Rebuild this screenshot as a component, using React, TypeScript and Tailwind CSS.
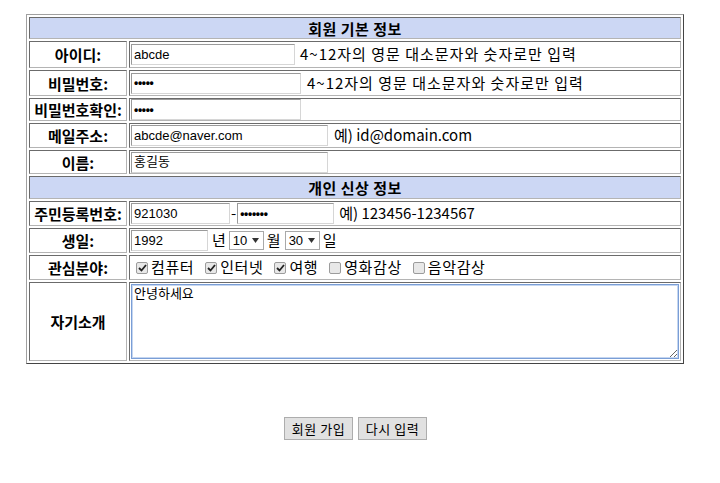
import React from "react";

const KR = { fontFamily: '"Noto Sans CJK KR", "Noto Sans", sans-serif' };

function Cell({ children, className = "", colSpan }: { children?: React.ReactNode; className?: string; colSpan?: number }) {
  return (
    <td
      colSpan={colSpan}
      className={`p-[1px] border border-t-[#6b6b6b] border-l-[#6b6b6b] border-r-[#b4b4b4] border-b-[#b4b4b4] ${className}`}
    >
      {children}
    </td>
  );
}

function Label({ children, h }: { children: React.ReactNode; h: string }) {
  return (
    <div className={`flex items-center justify-center font-bold text-[15px] leading-none whitespace-nowrap ${h}`}>{children}</div>
  );
}

function TextBox({ value, w, pw }: { value: string; w: string; pw?: boolean }) {
  return (
    <span
      className={`inline-flex items-center h-[21px] border border-t-[#9a9a9a] border-l-[#9a9a9a] border-r-[#d6d6d6] border-b-[#d6d6d6] bg-white px-[2px] text-[13px] text-black tracking-normal ${w}`}
      style={{ fontFamily: '"Liberation Sans", Arial, "Noto Sans CJK KR", sans-serif' }}
    >
      {pw ? <span className="text-[12px] tracking-[-0.3px] font-bold">{value}</span> : value}
    </span>
  );
}

function Sel({ v }: { v: string }) {
  return (
    <span
      className="inline-flex items-center h-[19px] w-[35px] border border-[#a9a9a9] bg-white pl-[3px] text-[13px] gap-[5px] tracking-normal"
      style={{ fontFamily: '"Liberation Sans", Arial, sans-serif' }}
    >
      {v}
      <svg width="7" height="5" viewBox="0 0 7 5">
        <path d="M0 0 H7 L3.5 5 Z" fill="#333" />
      </svg>
    </span>
  );
}

function Check({ on, label, first }: { on: boolean; label: string; first?: boolean }) {
  return (
    <span className={`inline-flex items-center ${first ? "ml-[4px]" : "ml-[11px]"}`}>
      <span className="inline-flex items-center justify-center w-[12px] h-[12px] border border-[#9c9c9c] bg-[#e8e8e8] rounded-[2px] mr-[3px]">
        {on && (
          <svg width="9" height="8" viewBox="0 0 9 8">
            <path d="M1 4 L3.5 6.5 L8 1" stroke="#222" strokeWidth="1.8" fill="none" />
          </svg>
        )}
      </span>
      <span className="text-[15px] tracking-[0.6px]">{label}</span>
    </span>
  );
}

export default function App() {
  return (
    <div className="w-[720px] h-[483px] bg-white text-black" style={KR}>
      <div className="pt-[14px] pl-[26px]">
        <table className="w-[658px] border-separate border-spacing-[2px] border border-t-[#a0a0a0] border-l-[#a0a0a0] border-r-[#444] border-b-[#444]">
          <tbody>
            <tr>
              <Cell colSpan={2} className="bg-[#ccd7f4]">
                <div className="h-[18px] flex items-center justify-center font-bold text-[15px] leading-none tracking-[0.5px]">회원 기본 정보</div>
              </Cell>
            </tr>
            <tr>
              <Cell className="w-[98px]"><Label h="h-[23px]">아이디:</Label></Cell>
              <Cell>
                <div className="h-[23px] flex items-center text-[15px] whitespace-nowrap tracking-[1px]">
                  <TextBox value="abcde" w="w-[164px]" />
                  <span className="ml-[5px]">4~12자의 영문 대소문자와 숫자로만 입력</span>
                </div>
              </Cell>
            </tr>
            <tr>
              <Cell><Label h="h-[22px]">비밀번호:</Label></Cell>
              <Cell>
                <div className="h-[22px] flex items-center text-[15px] whitespace-nowrap tracking-[1px]">
                  <TextBox value="•••••" w="w-[170px]" pw />
                  <span className="ml-[6px]">4~12자의 영문 대소문자와 숫자로만 입력</span>
                </div>
              </Cell>
            </tr>
            <tr>
              <Cell><Label h="h-[19px]">비밀번호확인:</Label></Cell>
              <Cell>
                <div className="h-[19px] flex items-center">
                  <TextBox value="•••••" w="w-[170px]" pw />
                </div>
              </Cell>
            </tr>
            <tr>
              <Cell><Label h="h-[21px]">메일주소:</Label></Cell>
              <Cell>
                <div className="h-[21px] flex items-center text-[15px] whitespace-nowrap">
                  <TextBox value="abcde@naver.com" w="w-[197px]" />
                  <span className="ml-[6px]">예) id@domain.com</span>
                </div>
              </Cell>
            </tr>
            <tr>
              <Cell><Label h="h-[20px]">이름:</Label></Cell>
              <Cell>
                <div className="h-[20px] flex items-center">
                  <TextBox value="홍길동" w="w-[197px]" />
                </div>
              </Cell>
            </tr>
            <tr>
              <Cell colSpan={2} className="bg-[#ccd7f4]">
                <div className="h-[19px] flex items-center justify-center font-bold text-[15px] leading-none tracking-[0.5px]">개인 신상 정보</div>
              </Cell>
            </tr>
            <tr>
              <Cell><Label h="h-[21px]">주민등록번호:</Label></Cell>
              <Cell>
                <div className="h-[21px] flex items-center text-[15px] whitespace-nowrap">
                  <TextBox value="921030" w="w-[99px]" />
                  <span className="mx-[1px]">-</span>
                  <TextBox value="•••••••" w="w-[97px]" pw />
                  <span className="ml-[5px]">예) 123456-1234567</span>
                </div>
              </Cell>
            </tr>
            <tr>
              <Cell><Label h="h-[21px]">생일:</Label></Cell>
              <Cell>
                <div className="h-[21px] flex items-center text-[15px] whitespace-nowrap">
                  <TextBox value="1992" w="w-[77px]" />
                  <span className="ml-[4px] mr-[3px]">년</span>
                  <Sel v="10" />
                  <span className="ml-[3px] mr-[4px]">월</span>
                  <Sel v="30" />
                  <span className="ml-[3px]">일</span>
                </div>
              </Cell>
            </tr>
            <tr>
              <Cell><Label h="h-[21px]">관심분야:</Label></Cell>
              <Cell>
                <div className="h-[21px] flex items-center whitespace-nowrap pl-[1px]">
                  <Check first on label="컴퓨터" />
                  <Check on label="인터넷" />
                  <Check on label="여행" />
                  <Check on={false} label="영화감상" />
                  <Check on={false} label="음악감상" />
                </div>
              </Cell>
            </tr>
            <tr>
              <Cell><Label h="h-[75px]">자기소개</Label></Cell>
              <Cell>
                <div className="h-[75px] flex">
                  <textarea
                    defaultValue="안녕하세요"
                    className="w-full h-[75px] border border-[#7a9ed6] outline outline-1 outline-[#c5d6f0] outline-offset-[-2px] px-[2px] py-0 text-[13px] leading-[16px] resize-y bg-white"
                    style={KR}
                  />
                </div>
              </Cell>
            </tr>
          </tbody>
        </table>
      </div>
      <div className="mt-[53px] flex justify-center gap-[5px] w-[711px]">
        <button className="h-[23px] w-[69px] border border-[#adadad] bg-[#e1e1e1] text-[13px] leading-none tracking-[0.5px]" style={KR}>회원 가입</button>
        <button className="h-[23px] w-[69px] border border-[#adadad] bg-[#e1e1e1] text-[13px] leading-none tracking-[0.5px]" style={KR}>다시 입력</button>
      </div>
    </div>
  );
}
